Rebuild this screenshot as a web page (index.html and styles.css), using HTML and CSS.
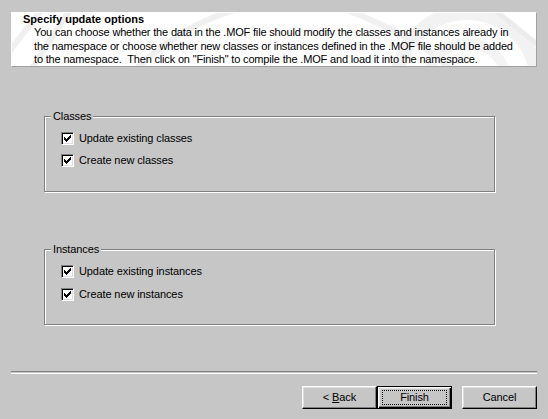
FILE: index.html
```html
<!DOCTYPE html>
<html>
<head>
<meta charset="utf-8">
<link rel="stylesheet" href="styles.css">
</head>
<body>
<div class="wizard">
  <div class="header">
    <svg class="watermark" width="524" height="53" viewBox="0 0 524 53">
      <g fill="none" stroke="#f0f0f0" stroke-width="6">
        <path d="M-4 40 L30 -4"/>
        <path d="M18 58 L60 -6"/>
        <path d="M120 60 Q170 10 230 -5"/>
        <path d="M330 -5 Q420 30 440 60"/>
      </g>
      <circle cx="455" cy="70" r="70" fill="none" stroke="#f2f2f2" stroke-width="14"/>
      <circle cx="455" cy="70" r="40" fill="none" stroke="#f4f4f4" stroke-width="10"/>
      <path d="M480 -5 L530 35" stroke="#ececec" stroke-width="5" fill="none"/>
    </svg>
    <div class="title">Specify update options</div>
    <div class="desc">You can choose whether the data in the .MOF file should modify the classes and instances already in<br>the namespace or choose whether new classes or instances defined in the .MOF file should be added<br>to the namespace.&nbsp; Then click on "Finish" to compile the .MOF and load it into the namespace.</div>
  </div>

  <div class="group group-classes">
    <div class="legend">Classes</div>
    <div class="rows">
      <div class="row"><span class="check"><svg width="7" height="7" viewBox="0 0 7 7" shape-rendering="crispEdges"><path d="M6 0h1v1h-1zM5 1h2v1h-2zM0 2h1v1h-1zM4 2h3v1h-3zM0 3h2v1h-2zM3 3h3v1h-3zM0 4h5v1h-5zM1 5h3v1h-3zM2 6h1v1h-1z" fill="#000"/></svg></span><span>Update existing classes</span></div>
      <div class="row"><span class="check"><svg width="7" height="7" viewBox="0 0 7 7" shape-rendering="crispEdges"><path d="M6 0h1v1h-1zM5 1h2v1h-2zM0 2h1v1h-1zM4 2h3v1h-3zM0 3h2v1h-2zM3 3h3v1h-3zM0 4h5v1h-5zM1 5h3v1h-3zM2 6h1v1h-1z" fill="#000"/></svg></span><span>Create new classes</span></div>
    </div>
  </div>

  <div class="group group-instances">
    <div class="legend">Instances</div>
    <div class="rows">
      <div class="row"><span class="check"><svg width="7" height="7" viewBox="0 0 7 7" shape-rendering="crispEdges"><path d="M6 0h1v1h-1zM5 1h2v1h-2zM0 2h1v1h-1zM4 2h3v1h-3zM0 3h2v1h-2zM3 3h3v1h-3zM0 4h5v1h-5zM1 5h3v1h-3zM2 6h1v1h-1z" fill="#000"/></svg></span><span>Update existing instances</span></div>
      <div class="row"><span class="check"><svg width="7" height="7" viewBox="0 0 7 7" shape-rendering="crispEdges"><path d="M6 0h1v1h-1zM5 1h2v1h-2zM0 2h1v1h-1zM4 2h3v1h-3zM0 3h2v1h-2zM3 3h3v1h-3zM0 4h5v1h-5zM1 5h3v1h-3zM2 6h1v1h-1z" fill="#000"/></svg></span><span>Create new instances</span></div>
    </div>
  </div>

  <div class="separator"></div>

  <div class="buttons">
    <div class="btn"><span>&lt; <u>B</u>ack</span></div>
    <div class="btn btn-default"><span class="focus">Finish</span></div>
    <div class="btn btn-cancel"><span>Cancel</span></div>
  </div>
</div>
</body>
</html>
```

FILE: styles.css
```css
html, body {
  margin: 0;
  padding: 0;
  background: #c6c6c6;
}

body {
  font-family: "Liberation Sans", Arial, sans-serif;
  font-size: 11px;
  letter-spacing: -0.1px;
  color: #000;
  width: 548px;
  height: 419px;
  overflow: hidden;
}

.wizard {
  display: flex;
  flex-direction: column;
  padding-top: 12px;
}

.header {
  position: relative;
  margin-left: 11px;
  width: 526px;
  height: 55px;
  box-sizing: border-box;
  background: #fff;
  border: 1px solid;
  border-color: #fff #a0a0a0 #a0a0a0 #fff;
  padding: 0 0 0 11px;
  overflow: hidden;
}

.watermark {
  position: absolute;
  left: 0;
  top: 0;
}

.title {
  position: relative;
  font-weight: bold;
  line-height: 13px;
  letter-spacing: 0;
}

.desc {
  position: relative;
  padding-left: 11px;
  line-height: 13.5px;
  white-space: nowrap;
  letter-spacing: -0.17px;
}

.group {
  margin-left: 44px;
  width: 451px;
  height: 76px;
  box-sizing: border-box;
  border: 1px solid #808080;
  box-shadow: inset 1px 1px 0 #fff, 1px 1px 0 #fff;
  display: flex;
  flex-direction: column;
  align-items: flex-start;
}

.group-classes {
  margin-top: 49px;
}

.group-instances {
  margin-top: 57px;
}

.legend {
  margin-top: -7px;
  margin-left: 6px;
  padding: 0 2px 0 2px;
  line-height: 13px;
  background: #c6c6c6;
}

.rows {
  display: flex;
  flex-direction: column;
  gap: 9px;
  margin-top: 9px;
  padding-left: 16px;
}

.group-instances .rows {
  gap: 10px;
}

.row {
  display: flex;
  align-items: center;
  height: 13px;
  line-height: 13px;
}

.check {
  width: 13px;
  height: 13px;
  box-sizing: border-box;
  background: #fff;
  border: 1px solid;
  border-color: #808080 #fff #fff #808080;
  box-shadow: inset 1px 1px 0 #000, inset -1px -1px 0 #dfdfdf;
  display: flex;
  align-items: center;
  justify-content: center;
  margin-right: 5px;
}

.check svg {
  display: block;
}

.separator {
  margin-top: 46px;
  margin-left: 11px;
  width: 526px;
  height: 1px;
  border-top: 1px solid #808080;
  border-bottom: 1px solid #fff;
}

.buttons {
  display: flex;
  justify-content: flex-end;
  margin-top: 12px;
  padding-right: 11px;
}

.btn {
  width: 75px;
  height: 23px;
  box-sizing: border-box;
  border: 1px solid;
  border-color: #fff #000 #000 #fff;
  box-shadow: inset -1px -1px 0 #808080, inset 1px 1px 0 #dfdfdf;
  display: flex;
  align-items: center;
  justify-content: center;
  line-height: 13px;
}

.btn u {
  text-decoration: underline;
  text-underline-offset: 1px;
}

.btn-default {
  border: 1px solid #000;
  box-shadow: inset 1px 1px 0 #fff, inset -1px -1px 0 #000, inset -2px -2px 0 #808080, inset 2px 2px 0 #dfdfdf;
}

.focus {
  width: 65px;
  height: 15px;
  box-sizing: border-box;
  border: 1px dotted #000;
  display: flex;
  align-items: center;
  justify-content: center;
}

.btn-cancel {
  margin-left: 10px;
}
```
